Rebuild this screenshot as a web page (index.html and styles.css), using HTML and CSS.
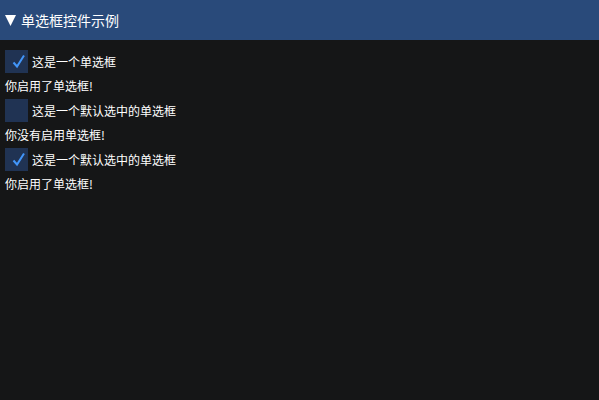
FILE: index.html
```html
<!DOCTYPE html>
<html lang="zh">
<head>
  <meta charset="UTF-8" />
  <title>单选框控件示例</title>
  <link rel="stylesheet" href="styles.css">
</head>
<body>
  <div class="header">
    <svg class="arrow" width="12" height="12" viewBox="0 0 12 12"><polygon points="0,0 11,0 5.5,11" fill="#fff"/></svg>
    <span class="title">单选框控件示例</span>
  </div>
  <div class="panel">
    <label class="check">
      <input type="checkbox" checked>
      <span class="box"><svg width="23" height="23" viewBox="0 0 23 23"><polyline points="8.5,12.5 12,16.5 19,5.5" fill="none" stroke="#4296fa" stroke-width="2"/></svg></span>
      <span>这是一个单选框</span>
    </label>
    <div class="line">你启用了单选框!</div>
    <label class="check">
      <input type="checkbox">
      <span class="box"><svg width="23" height="23" viewBox="0 0 23 23"><polyline points="8.5,12.5 12,16.5 19,5.5" fill="none" stroke="#4296fa" stroke-width="2"/></svg></span>
      <span>这是一个默认选中的单选框</span>
    </label>
    <div class="line">你没有启用单选框!</div>
    <label class="check">
      <input type="checkbox" checked>
      <span class="box"><svg width="23" height="23" viewBox="0 0 23 23"><polyline points="8.5,12.5 12,16.5 19,5.5" fill="none" stroke="#4296fa" stroke-width="2"/></svg></span>
      <span>这是一个默认选中的单选框</span>
    </label>
    <div class="line">你启用了单选框!</div>
  </div>
</body>
</html>
```

FILE: styles.css
```css
body {
  margin: 0;
  background: #151617;
  color: #fff;
  font-family: "Noto Sans CJK SC", "Noto Sans", sans-serif;
  font-size: 12px;
}
.header {
  height: 40px;
  background: #294a7a;
  display: flex;
  align-items: center;
  padding-left: 5px;
  gap: 4px;
}
.arrow {
  margin-top: 1px;
}
.title {
  font-size: 14px;
}
.panel {
  display: flex;
  flex-direction: column;
  gap: 4px;
  padding: 10px 5px;
}
.check {
  display: flex;
  align-items: center;
  gap: 4px;
  height: 23px;
  cursor: pointer;
}
.check input {
  display: none;
}
.box {
  width: 23px;
  height: 23px;
  background: #203353;
}
.box svg {
  display: block;
  visibility: hidden;
}
.check input:checked + .box svg {
  visibility: visible;
}
.line {
  height: 18px;
  line-height: 18px;
}
```
